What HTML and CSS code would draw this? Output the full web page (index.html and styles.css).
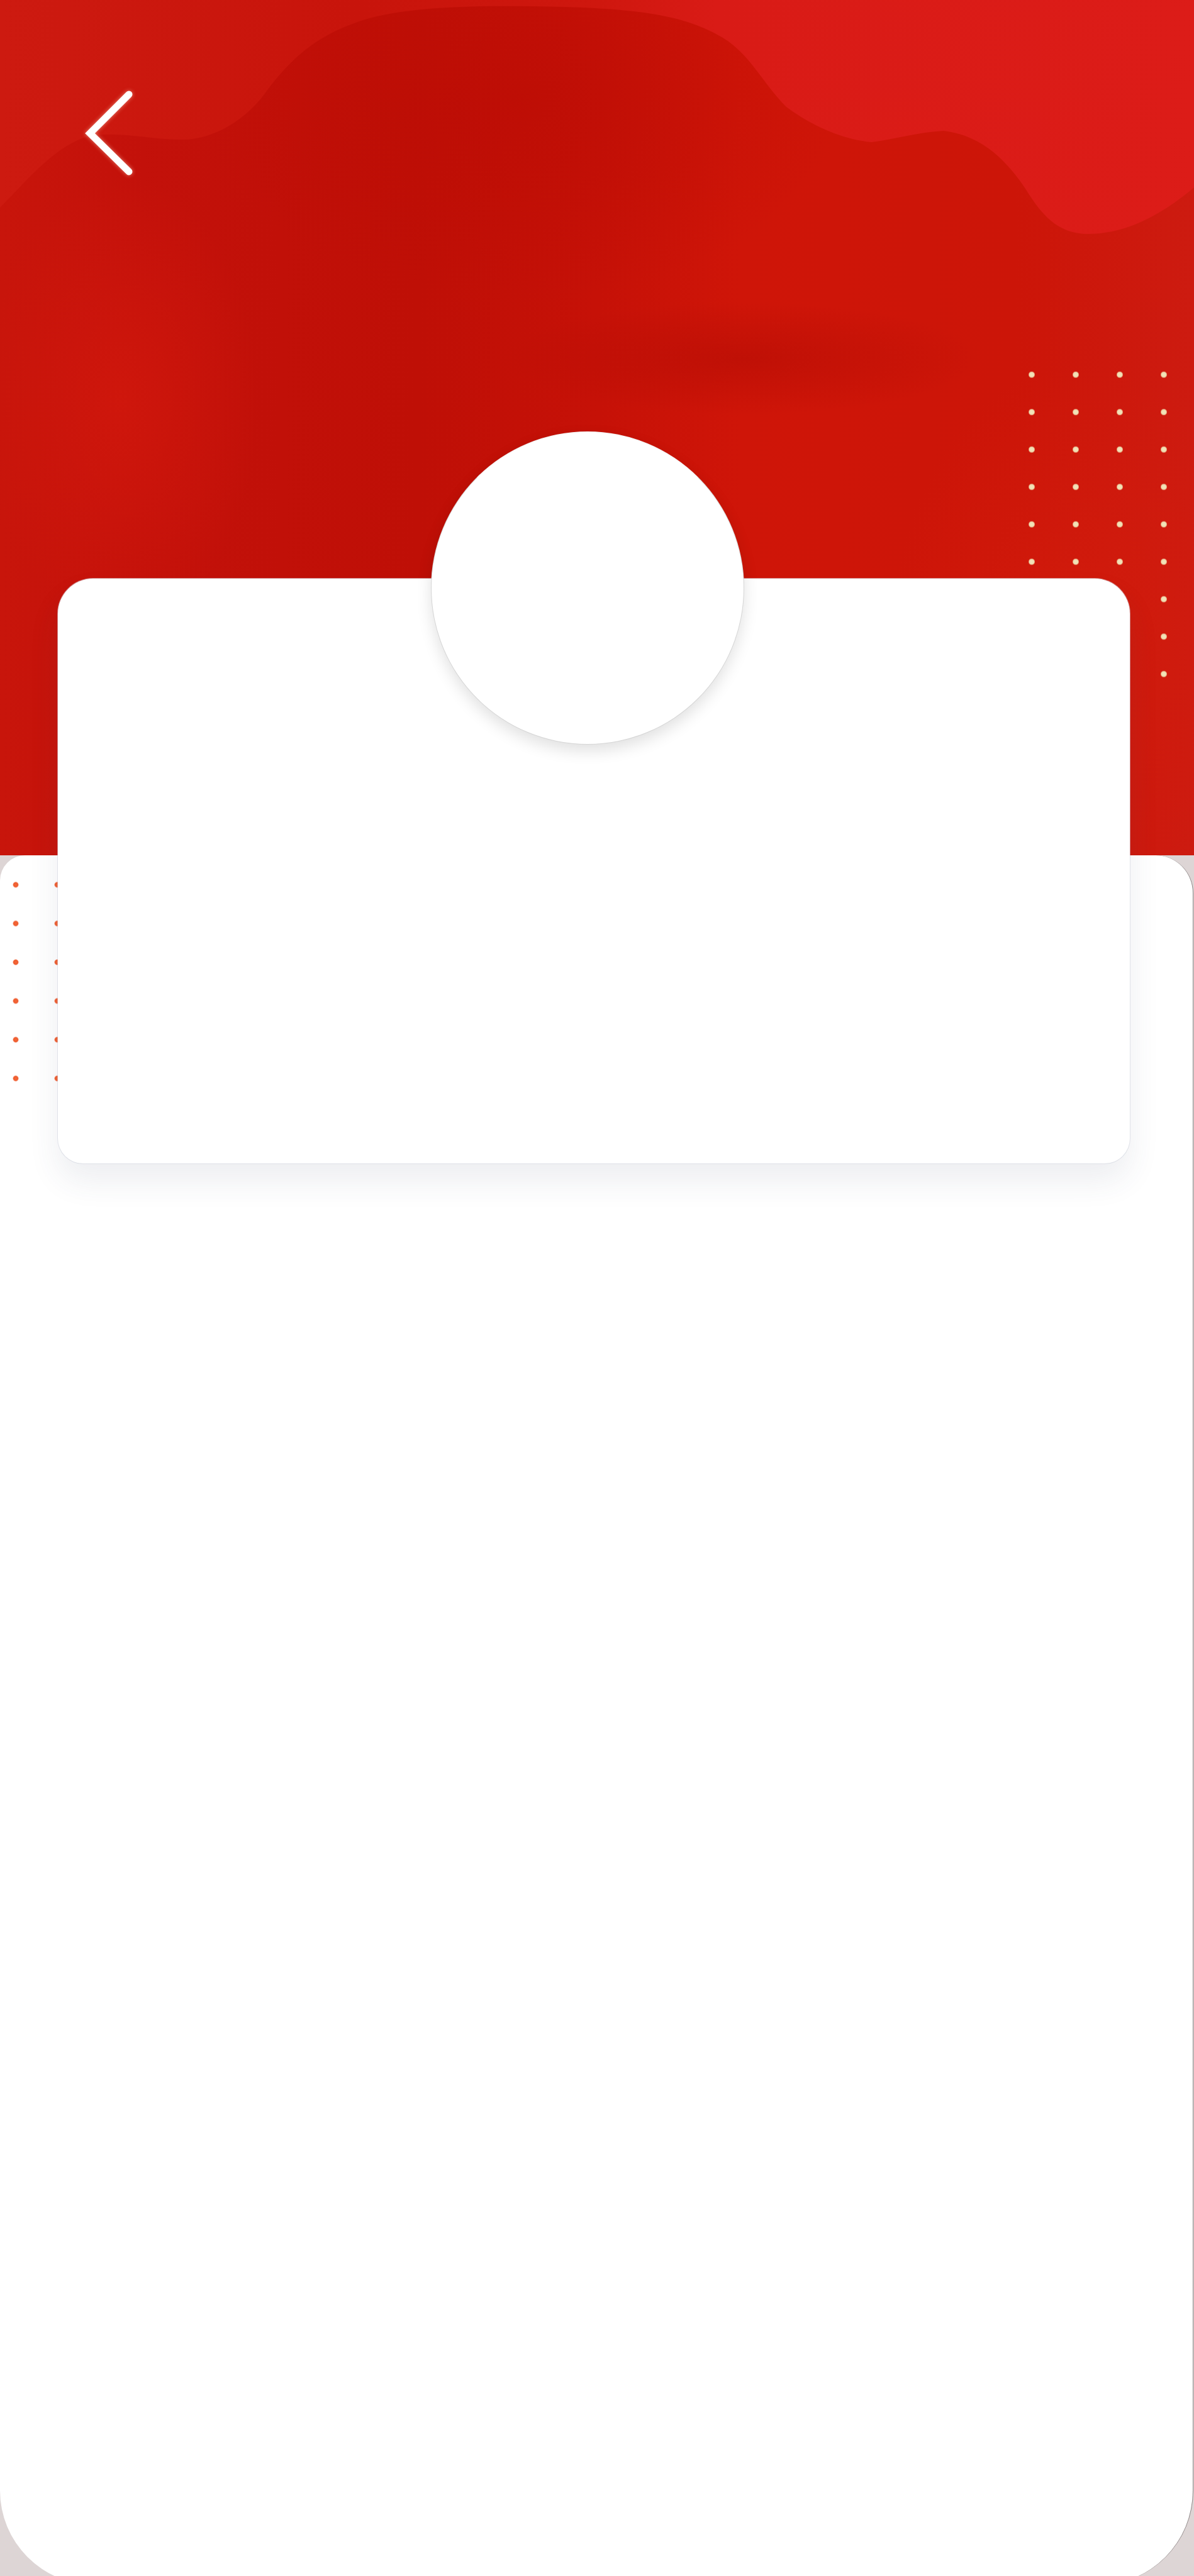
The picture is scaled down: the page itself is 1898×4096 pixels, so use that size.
FILE: index.html
```html
<!DOCTYPE html>
<html lang="en">
<head>
<meta charset="utf-8">
<title>Profile</title>
<link rel="stylesheet" href="styles.css">
</head>
<body>
<div class="screen">
  <header class="header">
    <svg class="header-bg" viewBox="0 0 1898 1360" preserveAspectRatio="none" aria-hidden="true">
      <defs>
        <linearGradient id="base" x1="0" y1="0" x2="1" y2="0">
          <stop offset="0" stop-color="#c8150b"/>
          <stop offset="0.12" stop-color="#c3110a"/>
          <stop offset="0.35" stop-color="#bf0f06"/>
          <stop offset="0.5" stop-color="#c61107"/>
          <stop offset="0.62" stop-color="#cf1508"/>
          <stop offset="0.85" stop-color="#cc1508"/>
          <stop offset="1" stop-color="#cd1b10"/>
        </linearGradient>
        <linearGradient id="topwave" x1="0" y1="0" x2="1" y2="0">
          <stop offset="0" stop-color="#cd1a10"/>
          <stop offset="0.3" stop-color="#c8140b"/>
          <stop offset="0.5" stop-color="#cf170e"/>
          <stop offset="0.6" stop-color="#d91b16"/>
          <stop offset="1" stop-color="#dc1c18"/>
        </linearGradient>
        <radialGradient id="glowLeft" cx="0.5" cy="0.5" r="0.5">
          <stop offset="0" stop-color="#d0170c" stop-opacity="0.9"/>
          <stop offset="1" stop-color="#d0170c" stop-opacity="0"/>
        </radialGradient>
        <radialGradient id="shadeMid" cx="0.5" cy="0.5" r="0.5">
          <stop offset="0" stop-color="#b30c04" stop-opacity="0.55"/>
          <stop offset="1" stop-color="#b30c04" stop-opacity="0"/>
        </radialGradient>
        <radialGradient id="glowRight" cx="0.5" cy="0.5" r="0.5">
          <stop offset="0" stop-color="#d31c0c" stop-opacity="0.7"/>
          <stop offset="1" stop-color="#d31c0c" stop-opacity="0"/>
        </radialGradient>
        <radialGradient id="darkTop" cx="0.5" cy="0.5" r="0.5">
          <stop offset="0" stop-color="#bb0c04" stop-opacity="0.6"/>
          <stop offset="1" stop-color="#bb0c04" stop-opacity="0"/>
        </radialGradient>
      </defs>
      <rect width="1898" height="1360" fill="url(#base)"/>
      <ellipse cx="190" cy="640" rx="220" ry="360" fill="url(#glowLeft)"/>
      <ellipse cx="1180" cy="570" rx="380" ry="90" fill="url(#shadeMid)"/>
      <ellipse cx="1720" cy="1000" rx="300" ry="420" fill="url(#glowRight)"/>
      <ellipse cx="820" cy="160" rx="520" ry="320" fill="url(#darkTop)"/>
      <path fill="url(#topwave)" d="M0 0 H1898 V298 C1860 330 1800 372 1730 372 C1680 372 1655 340 1630 300 C1600 255 1560 215 1500 208 C1460 210 1420 222 1385 226 C1340 222 1290 200 1250 170 C1210 130 1190 80 1140 55 C1080 22 1000 12 850 10 C720 8 620 14 560 38 C500 60 460 95 420 150 C390 190 340 222 290 222 C230 222 180 205 130 220 C80 240 40 290 0 330 Z"/>
    </svg>
    <div class="dots dots-right" aria-hidden="true"></div>

    <div class="topbar">
      <button class="back" type="button" aria-label="Back">
        <svg width="90" height="150" viewBox="0 0 90 150">
          <polyline points="75,10 13,72 75,133" fill="none" stroke="#ffffff" stroke-width="11" stroke-linecap="round" stroke-linejoin="miter"/>
        </svg>
      </button>
    </div>

    <section class="card">
      <div class="avatar"></div>
    </section>
  </header>

  <main class="sheet">
    <div class="dots dots-left" aria-hidden="true"></div>
  </main>
</div>
</body>
</html>
```

FILE: styles.css
```css
html, body {
  margin: 0;
  padding: 0;
  overflow: hidden;
}

body {
  font-family: "Liberation Sans", Arial, sans-serif;
  background: #ddd5d5;
}

.screen {
  width: 1898px;
  height: 4096px;
  overflow: hidden;
  position: relative;
  background: #ddd5d5;
}

.header {
  position: relative;
  height: 1360px;
  background: #c51108;
}

.header-bg {
  position: absolute;
  left: 0;
  top: 0;
  width: 1898px;
  height: 1360px;
  display: block;
}

.topbar {
  position: relative;
  box-sizing: border-box;
  height: 290px;
  padding: 140px 0 0 130px;
}

.back {
  display: block;
  width: 90px;
  height: 150px;
  padding: 0;
  margin: 0;
  border: 0;
  background: transparent;
  cursor: pointer;
  filter: drop-shadow(0 0 3px rgba(255, 200, 180, 0.6));
}

.back svg {
  display: block;
}

.dots {
  position: absolute;
}

.dots-right {
  left: 1605px;
  top: 566px;
  width: 280px;
  height: 536px;
  background-image: radial-gradient(circle, #f3e6bf 0, #efdcae 4px, rgba(239, 220, 174, 0) 5.5px);
  background-size: 70px 59.5px;
}

.card {
  position: relative;
  z-index: 3;
  display: flex;
  flex-direction: column;
  box-sizing: border-box;
  width: 1704px;
  height: 930px;
  margin: 630px 0 0 92px;
  background: #ffffff;
  border-radius: 56px 56px 40px 40px;
  box-shadow: 0 0 0 1px rgba(205, 210, 220, 0.55), 0 28px 50px rgba(60, 70, 95, 0.09);
}

.avatar {
  width: 498px;
  height: 498px;
  margin: -234px 0 0 593px;
  border-radius: 50%;
  background: #ffffff;
  box-sizing: border-box;
  border: 1px solid #d6d6d6;
  border-top-color: rgba(214, 214, 214, 0.3);
  box-shadow: 0 10px 24px rgba(0, 0, 0, 0.12);
}

.sheet {
  position: relative;
  z-index: 1;
  box-sizing: border-box;
  width: 1897px;
  height: 2750px;
  background: #ffffff;
  border-right: 1px solid #8f8888;
  border-radius: 40px 60px 150px 150px;
}

.dots-left {
  left: -8px;
  top: 16px;
  width: 132px;
  height: 370px;
  background-image: radial-gradient(circle, #f26a3c 0, #ef5a2c 3.5px, rgba(239, 90, 44, 0) 5px);
  background-size: 66px 61.6px;
}
```
